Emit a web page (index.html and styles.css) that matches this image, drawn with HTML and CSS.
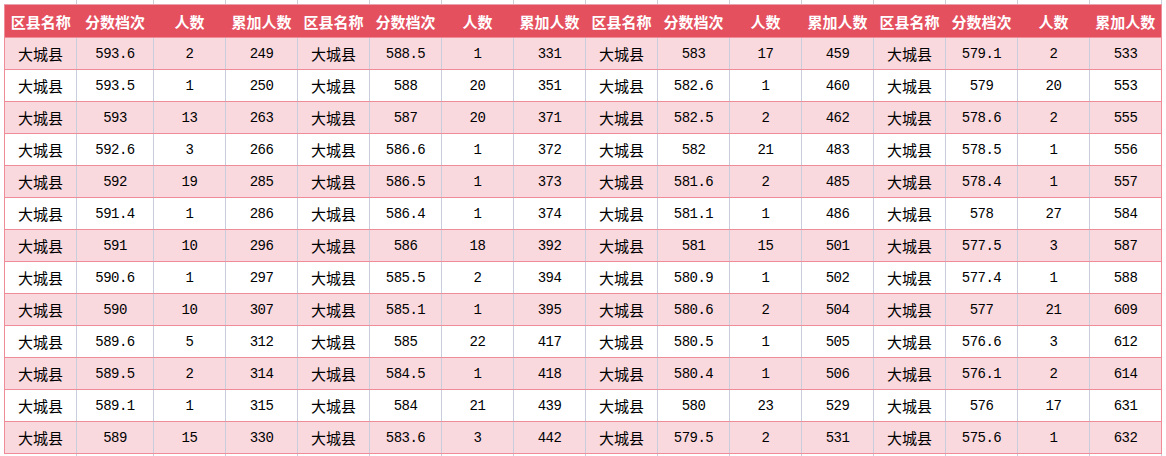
FILE: index.html
```html
<!DOCTYPE html>
<html lang="zh">
<head>
<meta charset="utf-8">
<link rel="stylesheet" href="styles.css">
</head>
<body>
<div class="sheet">
<table class="grid">
<colgroup>
<col class="c1"><col class="c2"><col class="cn"><col class="cn">
<col class="cn"><col class="cn"><col class="cn"><col class="cn">
<col class="cn"><col class="cn"><col class="cn"><col class="cn">
<col class="cn"><col class="cn"><col class="cn"><col class="cn">
</colgroup>
<thead>
<tr>
<th>区县名称</th><th>分数档次</th><th>人数</th><th>累加人数</th>
<th>区县名称</th><th>分数档次</th><th>人数</th><th>累加人数</th>
<th>区县名称</th><th>分数档次</th><th>人数</th><th>累加人数</th>
<th>区县名称</th><th>分数档次</th><th>人数</th><th>累加人数</th>
</tr>
</thead>
<tbody>
<tr class="odd"><td class="nm">大城县</td><td>593.6</td><td>2</td><td>249</td><td class="nm">大城县</td><td>588.5</td><td>1</td><td>331</td><td class="nm">大城县</td><td>583</td><td>17</td><td>459</td><td class="nm">大城县</td><td>579.1</td><td>2</td><td>533</td></tr>
<tr><td class="nm">大城县</td><td>593.5</td><td>1</td><td>250</td><td class="nm">大城县</td><td>588</td><td>20</td><td>351</td><td class="nm">大城县</td><td>582.6</td><td>1</td><td>460</td><td class="nm">大城县</td><td>579</td><td>20</td><td>553</td></tr>
<tr class="odd"><td class="nm">大城县</td><td>593</td><td>13</td><td>263</td><td class="nm">大城县</td><td>587</td><td>20</td><td>371</td><td class="nm">大城县</td><td>582.5</td><td>2</td><td>462</td><td class="nm">大城县</td><td>578.6</td><td>2</td><td>555</td></tr>
<tr><td class="nm">大城县</td><td>592.6</td><td>3</td><td>266</td><td class="nm">大城县</td><td>586.6</td><td>1</td><td>372</td><td class="nm">大城县</td><td>582</td><td>21</td><td>483</td><td class="nm">大城县</td><td>578.5</td><td>1</td><td>556</td></tr>
<tr class="odd"><td class="nm">大城县</td><td>592</td><td>19</td><td>285</td><td class="nm">大城县</td><td>586.5</td><td>1</td><td>373</td><td class="nm">大城县</td><td>581.6</td><td>2</td><td>485</td><td class="nm">大城县</td><td>578.4</td><td>1</td><td>557</td></tr>
<tr><td class="nm">大城县</td><td>591.4</td><td>1</td><td>286</td><td class="nm">大城县</td><td>586.4</td><td>1</td><td>374</td><td class="nm">大城县</td><td>581.1</td><td>1</td><td>486</td><td class="nm">大城县</td><td>578</td><td>27</td><td>584</td></tr>
<tr class="odd"><td class="nm">大城县</td><td>591</td><td>10</td><td>296</td><td class="nm">大城县</td><td>586</td><td>18</td><td>392</td><td class="nm">大城县</td><td>581</td><td>15</td><td>501</td><td class="nm">大城县</td><td>577.5</td><td>3</td><td>587</td></tr>
<tr><td class="nm">大城县</td><td>590.6</td><td>1</td><td>297</td><td class="nm">大城县</td><td>585.5</td><td>2</td><td>394</td><td class="nm">大城县</td><td>580.9</td><td>1</td><td>502</td><td class="nm">大城县</td><td>577.4</td><td>1</td><td>588</td></tr>
<tr class="odd"><td class="nm">大城县</td><td>590</td><td>10</td><td>307</td><td class="nm">大城县</td><td>585.1</td><td>1</td><td>395</td><td class="nm">大城县</td><td>580.6</td><td>2</td><td>504</td><td class="nm">大城县</td><td>577</td><td>21</td><td>609</td></tr>
<tr><td class="nm">大城县</td><td>589.6</td><td>5</td><td>312</td><td class="nm">大城县</td><td>585</td><td>22</td><td>417</td><td class="nm">大城县</td><td>580.5</td><td>1</td><td>505</td><td class="nm">大城县</td><td>576.6</td><td>3</td><td>612</td></tr>
<tr class="odd"><td class="nm">大城县</td><td>589.5</td><td>2</td><td>314</td><td class="nm">大城县</td><td>584.5</td><td>1</td><td>418</td><td class="nm">大城县</td><td>580.4</td><td>1</td><td>506</td><td class="nm">大城县</td><td>576.1</td><td>2</td><td>614</td></tr>
<tr><td class="nm">大城县</td><td>589.1</td><td>1</td><td>315</td><td class="nm">大城县</td><td>584</td><td>21</td><td>439</td><td class="nm">大城县</td><td>580</td><td>23</td><td>529</td><td class="nm">大城县</td><td>576</td><td>17</td><td>631</td></tr>
<tr class="odd"><td class="nm">大城县</td><td>589</td><td>15</td><td>330</td><td class="nm">大城县</td><td>583.6</td><td>3</td><td>442</td><td class="nm">大城县</td><td>579.5</td><td>2</td><td>531</td><td class="nm">大城县</td><td>575.6</td><td>1</td><td>632</td></tr>
</tbody>
</table>
</div>
</body>
</html>
```

FILE: styles.css
```css
html, body {
  margin: 0;
  padding: 0;
  background: #ffffff;
}

.sheet {
  width: 1166px;
  height: 456px;
  overflow: hidden;
  box-sizing: border-box;
  padding: 4px 0 0 4px;
  background-image:
    linear-gradient(to right, #c9cedd 0 1px, transparent 1px),
    repeating-linear-gradient(to right, #c9cedd 0 1px, transparent 1px 72px),
    linear-gradient(to right, #c9cedd 0 1px, transparent 1px);
  background-size: 1px 100%, 1009px 100%, 1px 100%;
  background-position: 76px 0, 153px 0, 1161px 0;
  background-repeat: no-repeat;
}

.grid {
  border-collapse: collapse;
  table-layout: fixed;
  width: 1158px;
  background: #ffffff;
}

.c1 { width: 72px; }
.c2 { width: 77px; }
.cn { width: 72px; }

.grid th {
  height: 32px;
  padding: 0;
  background: #e5505f;
  color: #ffffff;
  font-family: "Noto Sans CJK SC", sans-serif;
  font-weight: 700;
  font-size: 15px;
  text-align: center;
  white-space: nowrap;
  border-top: 1px solid #e9a2ab;
  border-bottom: 1px solid #ee8c97;
}

.grid th:first-child { border-left: 1px solid #ee8c97; }
.grid th:last-child { border-right: 1px solid #ee8c97; }

.grid td {
  height: 31px;
  padding: 0;
  text-align: center;
  color: #000000;
  font-family: "Liberation Mono", monospace;
  font-size: 14px;
  letter-spacing: -0.5px;
  border-bottom: 1px solid #ee8c97;
  border-left: 1px solid #c9cedd;
  border-right: 1px solid #c9cedd;
  white-space: nowrap;
}

.grid td.nm {
  font-family: "Noto Sans CJK SC", sans-serif;
  font-size: 15px;
  letter-spacing: 0;
}

.grid td:first-child { border-left: 1px solid #ee8c97; }
.grid td:last-child { border-right: 1px solid #ee8c97; }

.grid tr.odd td { background: #fad9de; }
```
